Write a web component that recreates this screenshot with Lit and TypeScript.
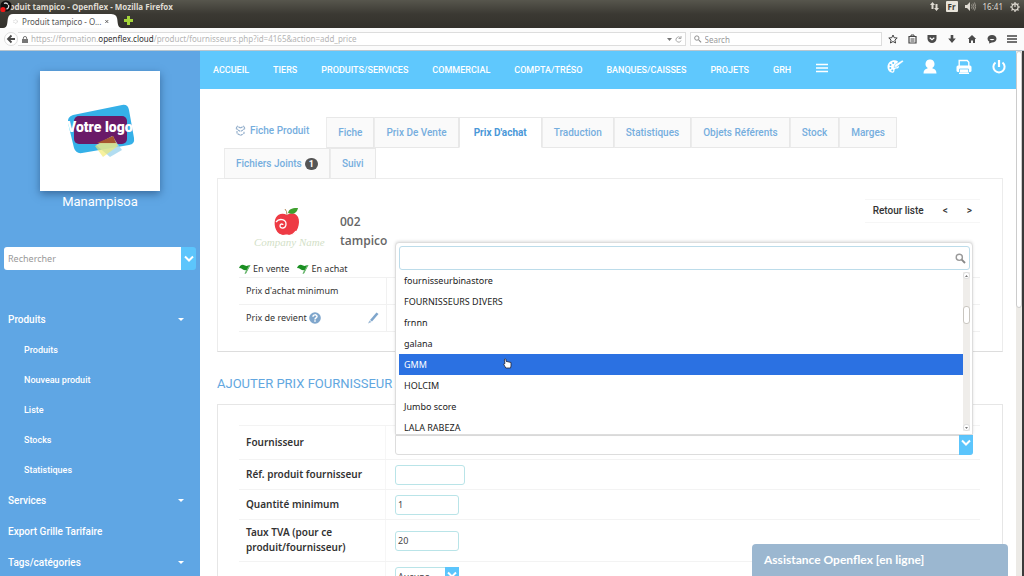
import { LitElement, html, svg, css, nothing } from "lit";
import { customElement } from "lit/decorators.js";
import { classMap } from "lit/directives/class-map.js";

const chevron = html`<svg class="chev" viewBox="0 0 10 8" width="10" height="8" aria-hidden="true"><path d="M1 1.500 5 5.500 9 1.500" fill="none" stroke="#fff" stroke-width="2"/></svg>`;

@customElement("browser-chrome")
class BrowserChrome extends LitElement {
  static styles = css`
    :host { display: block; font-family: "Noto Sans", "Open Sans", sans-serif; }
    .top { background: linear-gradient(#57564d, #3b3933 14px, #33312c); }
    .title { position: relative; display: flex; align-items: center; justify-content: space-between; height: 13px; padding: 0 4px 0 1px; color: #dfdbd2; font-size: 8px; line-height: 13px; font-weight: 700; }
    .app { position: absolute; left: 0; top: 0; }
    .tray { display: flex; align-items: center; gap: 7px; font-weight: 400; }
    .lang { background: #e8e4da; color: #3c3b37; border-radius: 1px; line-height: 11px; padding: 0 2px; font-weight: 700; }
    .tabs { display: flex; height: 15px; padding-left: 3px; align-items: flex-end; }
    .tab { display: flex; align-items: center; background: #fff; height: 14px; width: 96px; gap: 4px; color: #555; font-size: 8px; }
    .tab span { flex: 1; white-space: nowrap; }
    .side, .plus { flex: none; display: block; }
    .plus { align-self: center; margin-left: 2px; }
    .bar { display: flex; align-items: center; height: 22px; background: #fbfbfb; border-bottom: 1px solid #b9c6cf; padding: 0 7px 0 4px; gap: 6px; }
    button { border: 0; background: none; padding: 0; font: inherit; color: #4b4b4b; display: block; line-height: 0; }
    .url { flex: 1; display: flex; align-items: center; height: 12px; margin-left: -6px; border: 1px solid #ddd; border-left: 0; background: #fff; font-size: 8px; line-height: 12px; color: #b5b5b5; gap: 3px; padding: 0 3px 0 4px; white-space: nowrap; }
    .url p { flex: 1; margin: 0; }
    .url b { font-weight: 400; color: #333; }
    .search { display: flex; align-items: center; gap: 3px; width: 192px; box-sizing: border-box; height: 14px; border: 1px solid #ddd; background: #fff; padding: 0 3px; margin-left: -2px; }
    .search input { border: 0; outline: 0; padding: 0; width: 100%; font: 8px "Noto Sans", sans-serif; background: none; }
    .search input::placeholder { color: #999; opacity: 1; }
    .icons { display: flex; align-items: center; gap: 10px; }
  `;
  render() {
    return html`
      <div class="top">
        <div class="title">
          <span>Produit tampico - Openflex - Mozilla Firefox</span>
          <svg class="app" width="12" height="13" viewBox="0 0 12 13" aria-hidden="true"><circle cx="6" cy="6" r="5.6" fill="#111"/><path d="M4 3.500a3 3 0 0 1 4 1M8.500 5a3 3 0 0 1-2 4" fill="none" stroke="#ddd" stroke-width="1.300"/><circle cx="3" cy="9.500" r="2.600" fill="#f01818"/></svg>
          <div class="tray">
            <svg width="9" height="9" viewBox="0 0 9 9" aria-hidden="true"><path d="M2.500 0 5 3H3.500v4h-2V3H0zM6.500 9 4 6h1.500V2h2v4H9z" fill="#dfdbd2"/></svg>
            <span class="lang">Fr</span>
            <svg width="11" height="9" viewBox="0 0 11 9" aria-hidden="true"><path d="M0 3h2l3-3v9L2 6H0z" fill="#dfdbd2"/><path d="M6.500 2.500q1.300 2 0 4M8 1.500q2 3 0 6M9.500.5q2.500 4 0 8" fill="none" stroke="#a5a299" stroke-width=".9"/></svg>
            <span>16:41</span>
            <svg width="10" height="10" viewBox="0 0 10 10" aria-hidden="true"><circle cx="5" cy="5" r="3.100" fill="none" stroke="#dfdbd2" stroke-width="1.200"/><path d="M5 0v5M0 5h2M8 5h2M1.500 1.500l1.300 1.300M8.500 1.500 7.200 2.800M1.500 8.500l1.300-1.300M8.500 8.500 7.200 7.200M5 8v2" stroke="#dfdbd2" stroke-width="1.200"/></svg>
          </div>
        </div>
        <div class="tabs">
          <svg class="side" width="10" height="14" viewBox="0 0 10 14"><path d="M0 14C5 14 4 8 5 4 6 1 7 0 10 0V14z" fill="#fff"/></svg>
          <div class="tab">
            <svg width="7" height="7" viewBox="0 0 7 7" aria-hidden="true"><circle cx="3.500" cy="3.500" r="2.500" fill="none" stroke="#bbb" stroke-dasharray="1.500 1"/></svg>
            <span>Produit tampico - O...</span>
            <svg width="5" height="5" viewBox="0 0 5 5" aria-hidden="true"><path d="m.5.5 4 4m0-4-4 4" stroke="#555" stroke-width="1.300"/></svg>
          </div>
          <svg class="side" width="13" height="14" viewBox="0 0 13 14"><path d="M13 14C8 14 9 8 8 4 7 1 6 0 0 0V14z" fill="#fff"/></svg>
          <svg class="plus" width="9" height="9" viewBox="0 0 9 9" aria-hidden="true"><path d="M3 0h3v3h3v3H6v3H3V6H0V3h3z" fill="#a4d43a"/></svg>
        </div>
      </div>
      <div class="bar">
        <button aria-label="Back"><svg width="14" height="14" viewBox="0 0 14 14"><circle cx="7" cy="7" r="6.500" fill="#fff" stroke="#ddd"/><path d="M7.500 3.500 4 7l3.500 3.500M4 7h7" fill="none" stroke="#4b4b4b" stroke-width="1.800"/></svg></button>
        <div class="url">
          <svg width="6" height="7" viewBox="0 0 6 7" aria-hidden="true"><path d="M0 3h6v4H0z" fill="#777"/><path d="M1.300 3V2a1.700 1.500 0 0 1 3.400 0v1" fill="none" stroke="#777"/></svg>
          <p>https://formation.<b>openflex.cloud</b>/product/fournisseurs.php?id=4165&amp;action=add_price</p>
          <svg width="5" height="3" viewBox="0 0 5 3" aria-hidden="true"><path d="M0 0h5L2.500 3z" fill="#777"/></svg>
          <svg width="7" height="7" viewBox="0 0 7 7" aria-hidden="true"><path d="M6 4.500A2.600 2.600 0 1 1 5.500 1.800M6 0v2.500H3.500" fill="none" stroke="#aaa"/></svg>
        </div>
        <label class="search">
          <svg width="8" height="8" viewBox="0 0 8 8" aria-hidden="true"><circle cx="3" cy="3" r="2.300" fill="none" stroke="#888"/><path d="m5 5 2.500 2.500" stroke="#888" stroke-width="1.200"/></svg>
          <input aria-label="Search" placeholder="Search">
        </label>
        <div class="icons">
          <button aria-label="Bookmark"><svg width="10" height="10" viewBox="0 0 10 10"><path d="m5 1 1.200 2.700 3 .3-2.300 2 .7 3L5 7.500 2.400 9l.7-3L.8 4l3-.3z" fill="none" stroke="#444"/></svg></button>
          <button aria-label="List"><svg width="9" height="10" viewBox="0 0 9 10"><path d="M1 2.500h7v6.500H1z" fill="none" stroke="#444" stroke-width="1.200"/><path d="M3 2.500V1h3v1.500M2.500 5h4M2.500 7h4" stroke="#444" fill="none"/></svg></button>
          <button aria-label="Pocket"><svg width="10" height="10" viewBox="0 0 10 10"><path d="M.5 1h9v3.500a4.500 4.500 0 0 1-9 0z" fill="#4b4b4b"/><path d="m2.700 3.700 2.300 2 2.300-2" fill="none" stroke="#fff" stroke-width="1.200"/></svg></button>
          <button aria-label="Downloads"><svg width="10" height="10" viewBox="0 0 10 10"><path d="M3.700 1h2.600v3.500h2.500L5 9 1.200 4.500h2.500z" fill="#4b4b4b"/></svg></button>
          <button aria-label="Home"><svg width="10" height="10" viewBox="0 0 10 10"><path d="M5 1 .8 5H2v4h2V6.500h2V9h2V5h1.200z" fill="#4b4b4b"/></svg></button>
          <button aria-label="Hello"><svg width="10" height="10" viewBox="0 0 10 10"><path d="M5 1C7.500 1 9.500 2.500 9.500 4.700S7.500 8.500 5 8.500L2 9.500l.3-1.700A4 4 0 0 1 .5 4.700C.5 2.500 2.500 1 5 1z" fill="#4b4b4b"/><path d="M2.500 5q2.500 2.500 5 0z" fill="#fff"/></svg></button>
          <button aria-label="Menu"><svg width="10" height="10" viewBox="0 0 10 10"><path d="M0 2h10M0 5h10M0 8h10" stroke="#444" stroke-width="1.600"/></svg></button>
        </div>
      </div>`;
  }
}

@customElement("side-bar")
class SideBar extends LitElement {
  static styles = css`
    :host { display: block; flex: none; width: 200px; box-sizing: border-box; background: #5fa6e4; color: #fff; font-family: Roboto, sans-serif; overflow: hidden; padding-top: 20px; }
    .logo { display: block; width: 120px; height: 120px; margin: 0 auto; background: #fff; box-shadow: 0 3px 8px rgba(20, 50, 90, .5); }
    .votre { font: 900 14px Roboto, sans-serif; fill: #fff; }
    .name { margin: 3px 0 37px; text-align: center; font-size: 13px; line-height: 16px; }
    .search { display: flex; height: 23px; margin: 0 4px 34px; }
    .search input { flex: 1; min-width: 0; border: 0; border-radius: 3px 0 0 3px; padding: 0 4px; font: 9px "Noto Sans", sans-serif; background: #fff; }
    .search input::placeholder { color: #999; opacity: 1; }
    .search button { border: 0; background: #5cc5fc; border-radius: 0 3px 3px 0; width: 15px; padding: 0; line-height: 0; }
    ul { list-style: none; margin: 0; padding: 0; }
    a { display: flex; align-items: center; justify-content: space-between; color: #fff; text-decoration: none; font-size: 10px; font-weight: 500; line-height: 31px; padding: 0 16px 0 8px; }
    ul ul a { font-size: 9px; line-height: 30px; padding-left: 24px; }
  `;
  private groups = [
    { name: "Produits", arrow: true, items: ["Produits", "Nouveau produit", "Liste", "Stocks", "Statistiques"] },
    { name: "Services", arrow: true, items: [] },
    { name: "Export Grille Tarifaire", arrow: false, items: [] },
    { name: "Tags/catégories", arrow: true, items: [] },
  ];
  render() {
    return html`
      <svg class="logo" viewBox="0 0 120 120" role="img" aria-label="Votre logo">
        <path d="M33 44 82 34q6-1 7 5l5 28q1 6-5 7L42 82q-6 1-8-5L28 52q-1-6 5-8z" fill="#35b0e8"/>
        <rect x="34" y="45" width="53" height="28" rx="5" fill="#6a1a68"/>
        <path d="m56 74 16-9 10 14-12 7z" fill="#9fd4ee" opacity=".8"/>
        <path d="m55 75 18-10 5 10-15 11z" fill="#f3e96a" opacity=".65"/>
        <path d="m57 72 16-7 3 7z" fill="#a5562f"/>
        <text class="votre" x="27" y="61">Votre logo</text>
      </svg>
      <div class="name">Manampisoa</div>
      <div class="search">
        <input aria-label="Rechercher" placeholder="Rechercher">
        <button aria-label="Ouvrir">${chevron}</button>
      </div>
      <ul>
        ${this.groups.map(g => html`
          <li>
            <a href="#">${g.name}${g.arrow ? html`<svg width="6" height="3" viewBox="0 0 6 3" aria-hidden="true"><path d="M0 0h6L3 3z" fill="#fff"/></svg>` : nothing}</a>
            ${g.items.length ? html`<ul>${g.items.map(i => html`<li><a href="#">${i}</a></li>`)}</ul>` : nothing}
          </li>`)}
      </ul>`;
  }
}

@customElement("top-nav")
class TopNav extends LitElement {
  static styles = css`
    :host { display: flex; align-items: center; justify-content: space-between; height: 38px; background: #5fc8fd; padding: 0 9px 0 13px; font-family: Roboto, sans-serif; }
    nav, .tools { display: flex; align-items: center; }
    nav { gap: 24px; }
    .tools { gap: 19px; padding-bottom: 6px; }
    a { color: #fff; text-decoration: none; font-size: 9px; font-weight: 500; line-height: 12px; white-space: nowrap; }
    button { border: 0; background: none; padding: 0; line-height: 0; }
    nav button { padding-bottom: 4px; }
  `;
  render() {
    return html`
      <nav>
        ${["ACCUEIL", "TIERS", "PRODUITS/SERVICES", "COMMERCIAL", "COMPTA/TRÉSO", "BANQUES/CAISSES", "PROJETS", "GRH"].map(t => html`<a href="#">${t}</a>`)}
        <button aria-label="Plus"><svg width="14" height="10" viewBox="0 0 14 10"><path d="M1 1.500h12M1 5h12M1 8.500h12" stroke="#fff" stroke-width="1.500"/></svg></button>
      </nav>
      <div class="tools">
        <button aria-label="Thème"><svg width="17" height="16" viewBox="0 0 17 16"><path d="M11 2.500C7-.5.5 2.500.5 8c0 4 3.500 6.500 6 5.500 1.500-.7.500-2.500 1.500-3.500s4 .5 4-3L9 8z" fill="#fff"/><path d="m7 8.500 1-3L15.500 1l1 1.500L9.500 8z" fill="#fff" stroke="#5fc8fd" stroke-width=".5"/><circle cx="3.500" cy="6" r="1" fill="#5fc8fd"/><circle cx="3.300" cy="9" r="1" fill="#5fc8fd"/><circle cx="5.300" cy="11.500" r="1" fill="#5fc8fd"/><circle cx="6.200" cy="4" r="1" fill="#5fc8fd"/></svg></button>
        <button aria-label="Utilisateur"><svg width="14" height="16" viewBox="0 0 14 16"><path d="M7 .5a4.200 4.500 0 0 1 2.500 8.300v.8c2.500.5 4 2 4 4.900H.5c0-2.900 1.500-4.400 4-4.900v-.8A4.200 4.500 0 0 1 7 .5z" fill="#fff"/></svg></button>
        <button aria-label="Imprimer"><svg width="16" height="16" viewBox="0 0 16 16"><path d="M3.200 7V1.500h8l1.600 1.700V7" fill="none" stroke="#fff" stroke-width="1.400"/><rect x=".5" y="6.500" width="15" height="6.500" rx="1.500" fill="#fff"/><path d="M3.500 10h9v4h-9z" fill="#fff" stroke="#5fc8fd" stroke-width=".8"/><path d="M3 14.300h10" stroke="#fff" stroke-width="1.400"/></svg></button>
        <button aria-label="Quitter"><svg width="16" height="16" viewBox="0 0 16 16"><path d="M4.500 3.500a5.600 5.600 0 1 0 7 0" fill="none" stroke="#fff" stroke-width="2"/><path d="M8 1v7" stroke="#fff" stroke-width="2.200"/></svg></button>
      </div>`;
  }
}

@customElement("product-tabs")
class ProductTabs extends LitElement {
  static styles = css`
    :host { display: flex; flex-wrap: wrap; padding: 28px 100px 0 7px; font: 500 10px/12px Roboto, sans-serif; }
    .head, a { color: #76aede; }
    .head { display: flex; align-items: center; gap: 4px; padding: 0 17px 4px 11px; }
    a { display: flex; align-items: center; gap: 3px; box-sizing: border-box; height: 31px; padding: 0 11px; border: 1px solid #e8e8e8; border-left-color: #ececec; background: #fafafa; text-decoration: none; white-space: nowrap; }
    .on { background: #fff; color: #4a98d8; font-weight: 700; border-color: #e8e8e8; border-bottom-color: #fff; padding: 0 14px; }
    b { background: #555; color: #fff; border-radius: 6px; padding: 0 4px; font-size: 9px; line-height: 12px; }
  `;
  private tabs = ["Fiche", "Prix De Vente", "Prix D'achat", "Traduction", "Statistiques", "Objets Référents", "Stock", "Marges", "Fichiers Joints", "Suivi"];
  render() {
    return html`
      <div class="head"><svg width="11" height="11" viewBox="0 0 11 11" aria-hidden="true"><path d="M5.500 3 2.500 1.200.8 3.500l2 1M5.500 3l3-1.800 1.700 2.300-2 1M2 6v2.500l3.500 1.800L9 8.500V6M3 5l2.500 1.500L8 5" fill="none" stroke="#8fabc9" stroke-width="1.100" stroke-dasharray="2.500 .7"/></svg>Fiche Produit</div>
      ${this.tabs.map(t => html`<a href="#" class=${classMap({ on: t === "Prix D'achat" })}>${t}${t === "Fichiers Joints" ? html`<b>1</b>` : nothing}</a>`)}`;
  }
}

@customElement("product-card")
class ProductCard extends LitElement {
  static styles = css`
    :host { display: block; margin-top: -1px; border: 1px solid #ececec; border-bottom-color: #ddd; padding: 20px 22px 19px 21px; font: 9px/14px "Noto Sans", "Open Sans", sans-serif; color: #333; }
    .head { display: flex; align-items: flex-start; gap: 14px; height: 62px; }
    .pic { margin: 8px 0 0 15px; }
    .cn { font: italic 11px "Liberation Serif", serif; fill: #d3dfc8; }
    .ref { margin-top: 13px; flex: 1; font: 600 12px/19px "Open Sans", sans-serif; color: #666; }
    .nav { display: flex; gap: 19px; border: 1px solid #f6f6f6; border-width: 1px 0; padding: 0 8px; font: 500 10px/22px Roboto, sans-serif; }
    .nav a { color: #333; text-decoration: none; }
    .state { display: flex; gap: 8px; line-height: 16px; }
    .state span { display: flex; align-items: center; gap: 2px; }
    table { border-collapse: collapse; width: 100%; }
    th, td { border: 1px solid #f1f1f1; border-width: 1px 0; padding: 0 7px; height: 27px; font-weight: 400; text-align: left; box-sizing: border-box; }
    th { width: 147px; border-right-width: 1px; }
    .row { display: flex; align-items: center; gap: 2px; }
    .pen { margin-left: auto; border: 0; padding: 0; background: none; line-height: 0; }
  `;
  render() {
    const flag = svg`<path d="M0 4C1.500 0 4 .5 6 1.500q1.500.8 3 0L11.500 1 7 9.500H5.500L7.500 6C5 7.500 3.500 4 0 4z" fill="#1a8f22"/><path d="M10.500 1.500 6.500 9" stroke="#bfe0bf" stroke-width=".6"/>`;
    return html`
      <div class="head">
        <svg class="pic" width="72" height="46" viewBox="0 0 72 46" role="img" aria-label="Company Name">
          <path d="M33 8c4-3 9-2 11 2 3 6-1 17-7 18-2 .4-3-.6-5-.4-2 .2-3 .8-5 0-6-2-8-12-5-17 2-4 7-5 11-2.600z" fill="#ee3a44"/>
          <path d="M22 15c3-4 10-3 10 2s-6 5-6 2 3-2 3-1M24 27c5 3 14 3 18-3" fill="none" stroke="#fff" stroke-width="1.300"/>
          <path d="M33 8q0-4-2-6" stroke="#b88a5a" fill="none"/>
          <path d="M34 6c1-5 6-5 10-5-1 5-5 7-10 5z" fill="#3fa02e"/>
          <text class="cn" x="0" y="39">Company Name</text>
        </svg>
        <div class="ref">002<br>tampico</div>
        <div class="nav"><a href="#">Retour liste</a><a href="#" aria-label="Précédent">&lt;</a><a href="#" aria-label="Suivant">&gt;</a></div>
      </div>
      <div class="state">
        <span><svg width="12" height="10" viewBox="0 0 12 10" aria-hidden="true">${flag}</svg>En vente</span>
        <span><svg width="12" height="10" viewBox="0 0 12 10" aria-hidden="true">${flag}</svg>En achat</span>
      </div>
      <table>
        <tr><th>Prix d'achat minimum</th><td></td></tr>
        <tr><th><div class="row">Prix de revient
          <svg width="12" height="12" viewBox="0 0 12 12" role="img" aria-label="Aide"><circle cx="6" cy="6" r="5.800" fill="#7fa6cc"/><path d="M4 4.700C4 2.300 8 2.300 8 4.500 8 6 6 5.900 6 7.500M6 8.300v1.500" fill="none" stroke="#fff" stroke-width="1.500"/></svg>
          <button class="pen" aria-label="Modifier"><svg width="12" height="12" viewBox="0 0 12 12"><path d="M9.500 .5 11.500 2 5 9.500 3 8z" fill="#7fa6cc"/><path d="m2.500 8.500 2 1.500L1 11.500z" fill="#9cb9d6"/></svg></button></div></th><td></td></tr>
      </table>`;
  }
}

@customElement("price-form")
class PriceForm extends LitElement {
  static styles = css`
    :host { display: block; border: 1px solid #e6e6e6; padding: 20px 22px 20px 21px; font: 10px/15px "Noto Sans", "Open Sans", sans-serif; color: #333; }
    .row { display: grid; grid-template-columns: 147px 1fr; border-top: 1px solid #f3f3f3; min-height: 30px; box-sizing: border-box; }
    .tall { min-height: 34px; }
    .name { display: flex; align-items: center; padding: 0 7px; font-weight: 600; border-right: 1px solid #f6f6f6; }
    .two { padding-top: 5px; padding-bottom: 6px; }
    .cell { display: flex; align-items: center; padding: 0 7px 0 9px; }
    .box, select { box-sizing: border-box; height: 20px; width: 64px; border: 1px solid #b9e4e8; border-radius: 3px; padding: 0 2px; font: 9px "Noto Sans", sans-serif; color: #444; background: #fff; outline: 0; }
    .wide { width: 70px; }
    .combo { position: relative; flex: 1; display: flex; align-self: flex-end; margin-bottom: 4px; }
    .pick { display: flex; position: relative; }
    select { appearance: none; flex: 1; }
    .combo select { border-color: #ddd; border-radius: 0 0 3px 3px; }
    .arrow { position: absolute; right: 0; top: 0; bottom: 0; width: 14px; background: #5cc5fc; border-radius: 0 0 3px 0; display: flex; justify-content: center; padding-top: 4px; box-sizing: border-box; pointer-events: none; }
    .panel { position: absolute; left: 0; right: 0; bottom: 100%; z-index: 2; background: #fff; border: 1px solid #ddd; border-radius: 4px 4px 0 0; box-shadow: 0 -1px 3px rgba(0, 0, 0, .12); padding: 3px 2px 0 3px; color: #222; font-size: 9px; }
    .find { display: flex; align-items: center; height: 22px; border: 1px solid #bcdcea; border-radius: 3px; padding: 0 3px; }
    .find input { flex: 1; border: 0; outline: 0; padding: 0 2px; font: 9px "Noto Sans", sans-serif; background: none; }
    .scroll { display: flex; height: 164px; overflow: hidden; }
    ul { list-style: none; margin: 0; padding: 0; flex: 1; }
    li { padding: 0 5px; line-height: 21px; }
    .hit { background: #2b71e2; color: #fff; position: relative; }
    .hand { position: absolute; left: 104px; top: 4px; }
    .track { width: 7px; margin: 2px 0 3px; display: flex; flex-direction: column; align-items: center; justify-content: space-between; background: #efedea; }
    .end, .thumb { width: 7px; box-sizing: border-box; border: 1px solid #ddd; border-radius: 3px; background: #fff; }
    .end { height: 7px; display: flex; align-items: center; justify-content: center; }
    .thumb { height: 18px; margin-bottom: 74px; border-color: #c9c6c0; }
  `;
  private names = ["fournisseurbinastore", "FOURNISSEURS DIVERS", "frnnn", "galana", "GMM", "HOLCIM", "Jumbo score", "LALA RABEZA"];
  render() {
    const tick = (d: string) => html`<div class="end"><svg width="3" height="2" viewBox="0 0 3 2"><path d=${d} fill="#777"/></svg></div>`;
    return html`
      <div class="row tall">
        <label class="name" for="f">Fournisseur</label>
        <div class="cell"><div class="combo">
          <select id="f"><option></option></select><span class="arrow">${chevron}</span>
          <div class="panel">
            <div class="find"><input aria-label="Filtrer les fournisseurs">
              <svg width="11" height="11" viewBox="0 0 11 11" aria-hidden="true"><circle cx="4.300" cy="4.300" r="3.100" fill="none" stroke="#999" stroke-width="1.400"/><path d="m6.700 6.700 3.300 3.300" stroke="#888" stroke-width="1.900"/></svg></div>
            <div class="scroll">
              <ul role="listbox" aria-label="Fournisseurs">
                ${this.names.map(n => html`<li role="option" aria-selected=${n === "GMM"} class=${classMap({ hit: n === "GMM" })}>${n}${n === "GMM" ? html`<svg class="hand" width="9" height="11" viewBox="0 0 9 11" aria-hidden="true"><path d="M2 .8c1 0 1 .5 1 2.500l5 1.200v3.500L7.500 10H2.800L.6 6.200 2 5.500 1.300 2z" fill="#fff" stroke="#223" stroke-width=".8"/></svg>` : nothing}</li>`)}
              </ul>
              <div class="track" aria-hidden="true">${tick("M0 2h3L1.500 0z")}<div class="thumb"></div>${tick("M0 0h3L1.500 2z")}</div>
            </div>
          </div>
        </div></div>
      </div>
      <div class="row"><label class="name" for="r">Réf. produit fournisseur</label><div class="cell"><input id="r" class="box wide"></div></div>
      <div class="row"><label class="name" for="q">Quantité minimum</label><div class="cell"><input id="q" class="box" value="1"></div></div>
      <div class="row"><label class="name two" for="t">Taux TVA (pour ce produit/fournisseur)</label><div class="cell"><input id="t" class="box" value="20"></div></div>
      <div class="row"><span class="name"></span><div class="cell"><div class="pick"><select aria-label="Remise"><option>Aucune</option></select><span class="arrow">${chevron}</span></div></div></div>`;
  }
}

@customElement("app-root")
class AppRoot extends LitElement {
  static styles = css`
    :host { display: flex; flex-direction: column; height: 100vh; overflow: hidden; position: relative; background: #fff; }
    .page { flex: 1; min-height: 0; display: flex; }
    .main { flex: 1; min-width: 0; overflow: hidden; }
    .body { padding: 0 13px 0 17px; }
    h2 { margin: 0; padding-top: 12px; font: 400 13px/40px Roboto, sans-serif; color: #62a7e0; white-space: nowrap; }
    .track { width: 6px; background: #eceae6; border-right: 2px solid #3a3a3a; }
    .thumb { height: 49%; box-sizing: border-box; border: 1px solid #ccc; border-radius: 3px; background: #fff; }
    .help { position: absolute; right: 16px; bottom: 0; width: 25%; height: 32px; box-sizing: border-box; padding: 0 12px; border: 0; border-radius: 4px 4px 0 0; background: #9bb7d0; color: #fff; font: 700 12px/32px Lato, sans-serif; text-align: left; z-index: 3; }
  `;
  render() {
    return html`
      <browser-chrome></browser-chrome>
      <div class="page">
        <side-bar></side-bar>
        <div class="main">
          <top-nav></top-nav>
          <div class="body">
            <product-tabs></product-tabs>
            <product-card></product-card>
            <h2>AJOUTER PRIX FOURNISSEUR</h2>
            <price-form></price-form>
          </div>
        </div>
        <div class="track"><div class="thumb"></div></div>
      </div>
      <button class="help">Assistance Openflex [en ligne]</button>`;
  }
}
